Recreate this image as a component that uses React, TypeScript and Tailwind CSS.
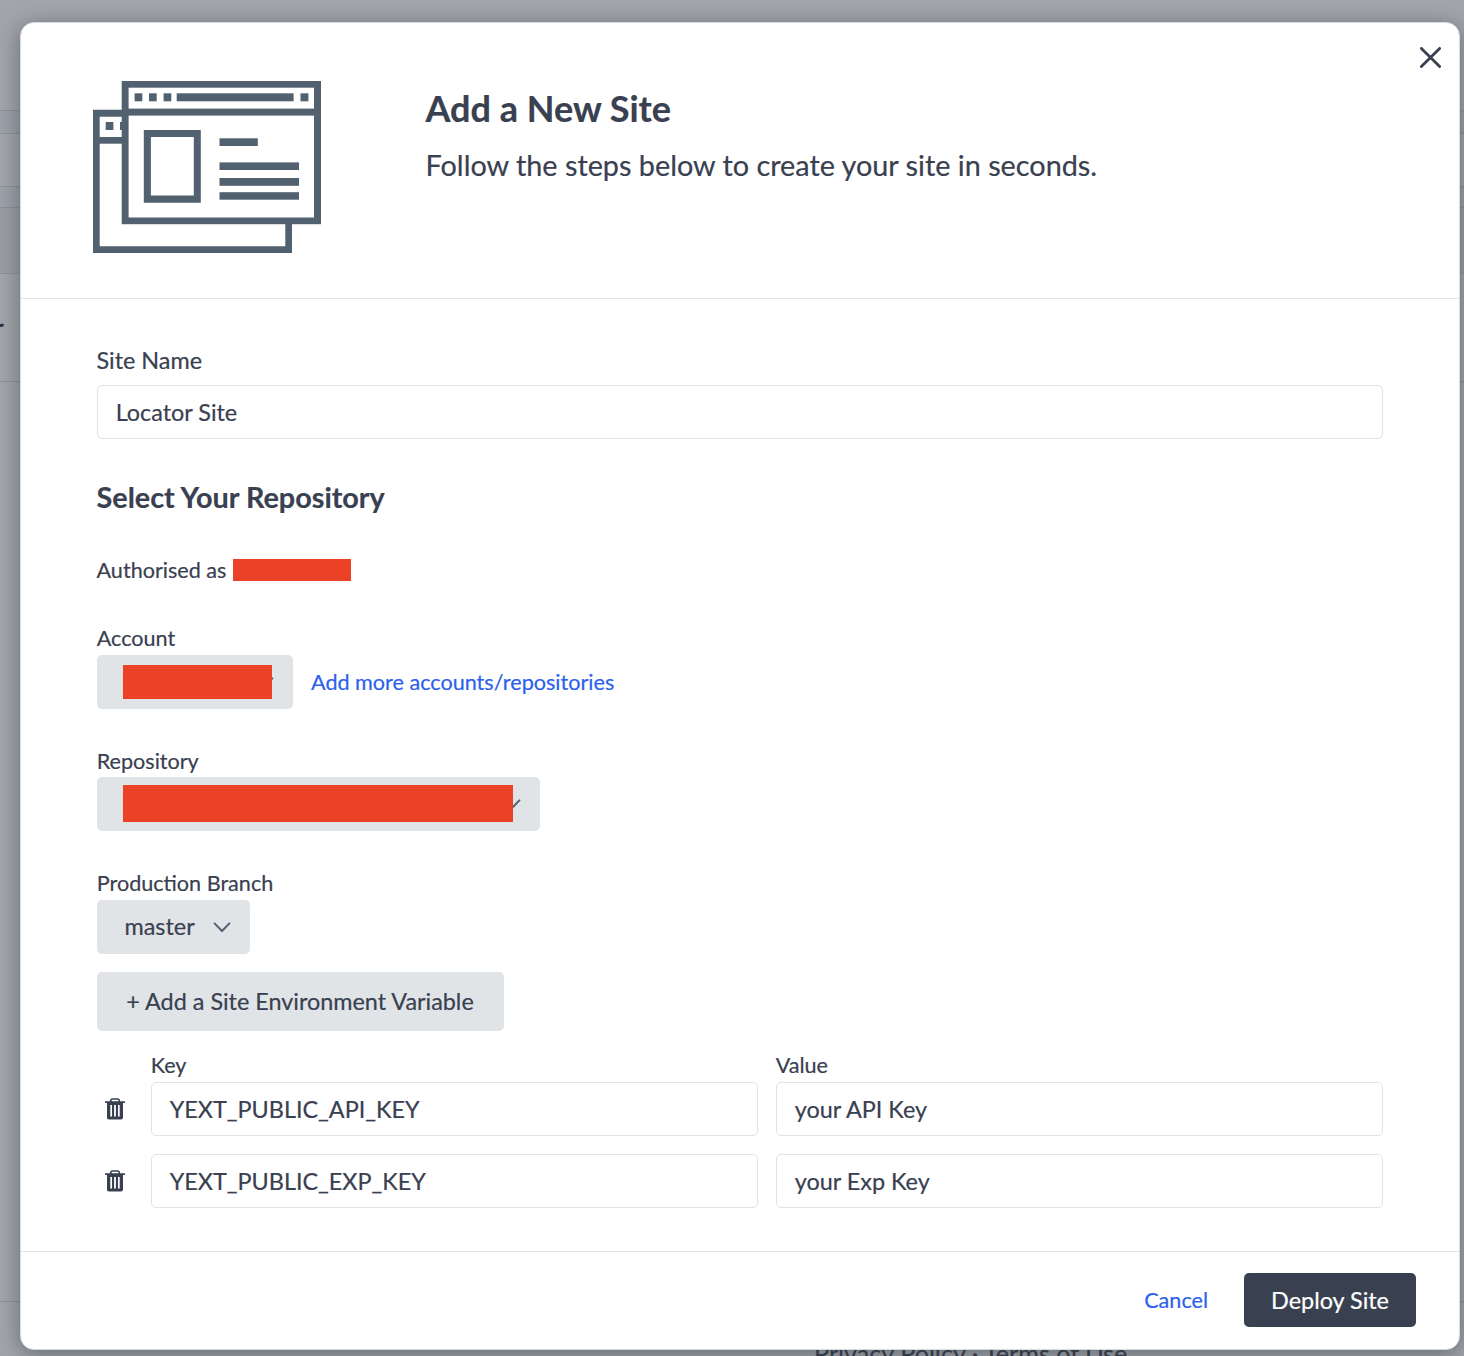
import React from "react";

function SitesIllustration() {
  return (
    <svg width="228" height="172" viewBox="0 0 228 172" fill="#526170" className="block" aria-hidden="true">
      <path fillRule="evenodd" d="M0 28.7H199V172H0ZM6.7 35.7V165.2H192.3V35.7Z" />
      <rect x="6" y="56" width="24" height="6.7" />
      <rect x="12.7" y="41" width="7.7" height="8" />
      <rect x="27" y="41" width="5" height="8" />
      <rect x="28.7" y="0" width="199.3" height="143.2" />
      <rect x="35.6" y="6.7" width="185.4" height="20.9" fill="#fff" />
      <rect x="35.6" y="34.6" width="185.4" height="101.9" fill="#fff" />
      <rect x="41.6" y="12.3" width="7.7" height="8" />
      <rect x="56" y="12.3" width="7.7" height="8" />
      <rect x="70.6" y="12.3" width="7.7" height="8" />
      <rect x="83.7" y="12.3" width="116.9" height="8" />
      <rect x="207.5" y="12.3" width="7.9" height="8" />
      <path fillRule="evenodd" d="M50.8 49H107.8V121.8H50.8ZM57.9 55.9V114.6H100.8V55.9Z" />
      <rect x="126.5" y="57.3" width="38.3" height="7.7" />
      <rect x="126.5" y="81.4" width="79.5" height="7.6" />
      <rect x="126.5" y="97" width="79.5" height="7.8" />
      <rect x="126.5" y="111.2" width="79.5" height="7.5" />
    </svg>
  );
}

function Chevron() {
  return (
    <svg width="18" height="12" viewBox="0 0 18 12" fill="none" stroke="#526170" strokeWidth="2" className="block shrink-0" aria-hidden="true">
      <path d="M1.6 2.4L9 10L16.4 2.4" strokeLinecap="round" />
    </svg>
  );
}

function TrashIcon() {
  return (
    <svg width="20" height="22" viewBox="0 0 20 22" className="block" aria-hidden="true">
      <path d="M5.8 4V2.6Q5.8 1 7.4 1H12.6Q14.2 1 14.2 2.6V4" fill="none" stroke="#394050" strokeWidth="1.6" />
      <rect x="0" y="3.2" width="20" height="1.8" rx=".6" fill="#394050" />
      <path d="M2 4.5H18V19.7Q18 21.4 16.1 21.4H3.9Q2 21.4 2 19.7Z" fill="#394050" />
      <path d="M6.2 6.9V18.4M10 6.9V18.4M13.8 6.9V18.4" stroke="#fff" strokeWidth="1.8" />
      <path d="M8.1 6V19M11.9 6V19" stroke="#394050" strokeWidth="1.6" />
    </svg>
  );
}

function Backdrop() {
  return (
    <div className="absolute inset-0 flex flex-col bg-[#a2a5a9]">
      <div className="h-[111px] shrink-0 border-b border-[#8e9195]" />
      <div className="h-[23px] shrink-0 border-b border-[#8e9195] bg-[#9da1a8]" />
      <div className="h-[53px] shrink-0 border-b border-[#8e9195]" />
      <div className="h-[21px] shrink-0 border-b border-[#8e9195] bg-[#9da1a8]" />
      <div className="h-[66px] shrink-0 border-b border-[#8e9195] bg-[#9b9ea4]" />
      <div className="flex h-[108px] shrink-0 items-center overflow-hidden border-b border-[#8e9195]">
        <span className="-ml-[5px] text-[23.4px] leading-none text-[#252b39] [-webkit-text-stroke:0.6px]">r</span>
      </div>
      <div className="h-[920px] shrink-0 border-b border-[#8e9195]" />
      <div className="flex pl-[814px] pt-[37px]">
        <span className="whitespace-nowrap text-[25.2px] leading-[28px] text-[#343a48]">Privacy Policy · Terms of Use</span>
      </div>
    </div>
  );
}

function Field({ value }: { value: string }) {
  return (
    <div className="flex h-[54px] items-center rounded-[5px] border border-[#e1e4e7] bg-white px-[17.7px] pt-[2px] text-[23.4px]">
      {value}
    </div>
  );
}

function Label({ children }: { children: React.ReactNode }) {
  return <div className="-ml-[0.3px] h-[28px] text-[21.6px] leading-[28px]">{children}</div>;
}

const variables = [
  ["YEXT_PUBLIC_API_KEY", "your API Key"],
  ["YEXT_PUBLIC_EXP_KEY", "your Exp Key"],
];

export default function App() {
  return (
    <div className="relative h-[1356px] w-[1464px] overflow-hidden font-['Lato',sans-serif] text-[#394050] [-webkit-text-stroke:0.2px]">
      <Backdrop />
      <div className="relative pl-[20px] pt-[22px]">
        <div className="flex h-[1328px] w-[1440px] flex-col rounded-[14px] border border-[#d5dade] bg-white shadow-[0_4px_22px_rgba(50,58,72,0.55)]">
          <header className="flex h-[276px] shrink-0 items-start border-b border-[#e1e4e7] pl-[72px] pt-[58px]">
            <SitesIllustration />
            <div className="ml-[104.5px] grow">
              <h1 className="mt-[5px] text-[36px] font-bold leading-[44px]">Add a New Site</h1>
              <p className="mt-[17px] text-[28.8px] leading-[36px]">Follow the steps below to create your site in seconds.</p>
            </div>
            <button className="-mt-[34px] mr-[18px]" aria-label="Close">
              <svg width="21" height="21" viewBox="0 0 21 21" fill="none" stroke="#394050" strokeWidth="2.8" strokeLinecap="round" className="block">
                <path d="M1.4 1.4L19.6 19.6M19.6 1.4L1.4 19.6" />
              </svg>
            </button>
          </header>

          <main className="h-[952px] shrink-0 px-[76px] pt-[47px]">
            <div className="-ml-[0.5px] mb-[11px] h-[28px] text-[23.4px] leading-[28px]">Site Name</div>
            <Field value="Locator Site" />
            <h2 className="-ml-[0.5px] mt-[40px] text-[28.8px] font-bold leading-[36px]">Select Your Repository</h2>
            <div className="-ml-[0.5px] mt-[41px] flex items-center gap-[6.5px] text-[21.6px] leading-[28px]">
              Authorised as
              <span className="h-[22px] w-[118px] bg-[#eb4127]" />
            </div>

            <div className="mt-[40px]">
              <Label>Account</Label>
              <div className="mt-[3px] flex items-center gap-[18px]">
                <button className="relative flex h-[54px] w-[196px] items-center justify-end rounded-[5px] bg-[#e0e4e7] pr-[19px]">
                  <Chevron />
                  <span className="absolute left-[26px] top-[10px] h-[34px] w-[148.5px] bg-[#eb4127]" />
                </button>
                <a className="text-[21.6px] text-[#2c60ee]">Add more accounts/repositories</a>
              </div>
            </div>

            <div className="mt-[38px]">
              <Label>Repository</Label>
              <button className="relative mt-[2px] flex h-[54px] w-[443px] items-center justify-end rounded-[5px] bg-[#e0e4e7] pr-[19px]">
                <Chevron />
                <span className="absolute left-[26px] top-[8px] h-[37px] w-[390px] bg-[#eb4127]" />
              </button>
            </div>

            <div className="mt-[38px]">
              <Label>Production Branch</Label>
              <button className="mt-[3px] flex h-[54px] w-[153px] items-center justify-between rounded-[5px] bg-[#e0e4e7] pl-[27.5px] pr-[19px] text-[23.4px]">
                master
                <Chevron />
              </button>
            </div>

            <button className="mt-[18px] flex h-[59px] w-[407px] items-center justify-center rounded-[5px] bg-[#e0e4e7] pr-[1px] text-[23.4px]">
              + Add a Site Environment Variable
            </button>

            <div className="mt-[20px] grid grid-cols-[36px_1fr_1fr] gap-x-[18px]">
              <span />
              <Label>Key</Label>
              <Label>Value</Label>
            </div>
            <div className="mt-[3px] flex flex-col gap-[18px]">
              {variables.map(([key, value]) => (
                <div key={key} className="grid grid-cols-[36px_1fr_1fr] items-center gap-x-[18px]">
                  <span className="pl-[8px]">
                    <TrashIcon />
                  </span>
                  <Field value={key} />
                  <Field value={value} />
                </div>
              ))}
            </div>
          </main>

          <footer className="flex grow items-center justify-end gap-[36px] border-t border-[#e1e4e7] pb-[2px] pr-[43px]">
            <button className="pt-[1px] text-[21.6px] text-[#2c60ee]">Cancel</button>
            <button className="h-[54px] w-[172px] rounded-[5px] bg-[#394050] pt-[2px] text-[23.4px] text-white">Deploy Site</button>
          </footer>
        </div>
      </div>
    </div>
  );
}
